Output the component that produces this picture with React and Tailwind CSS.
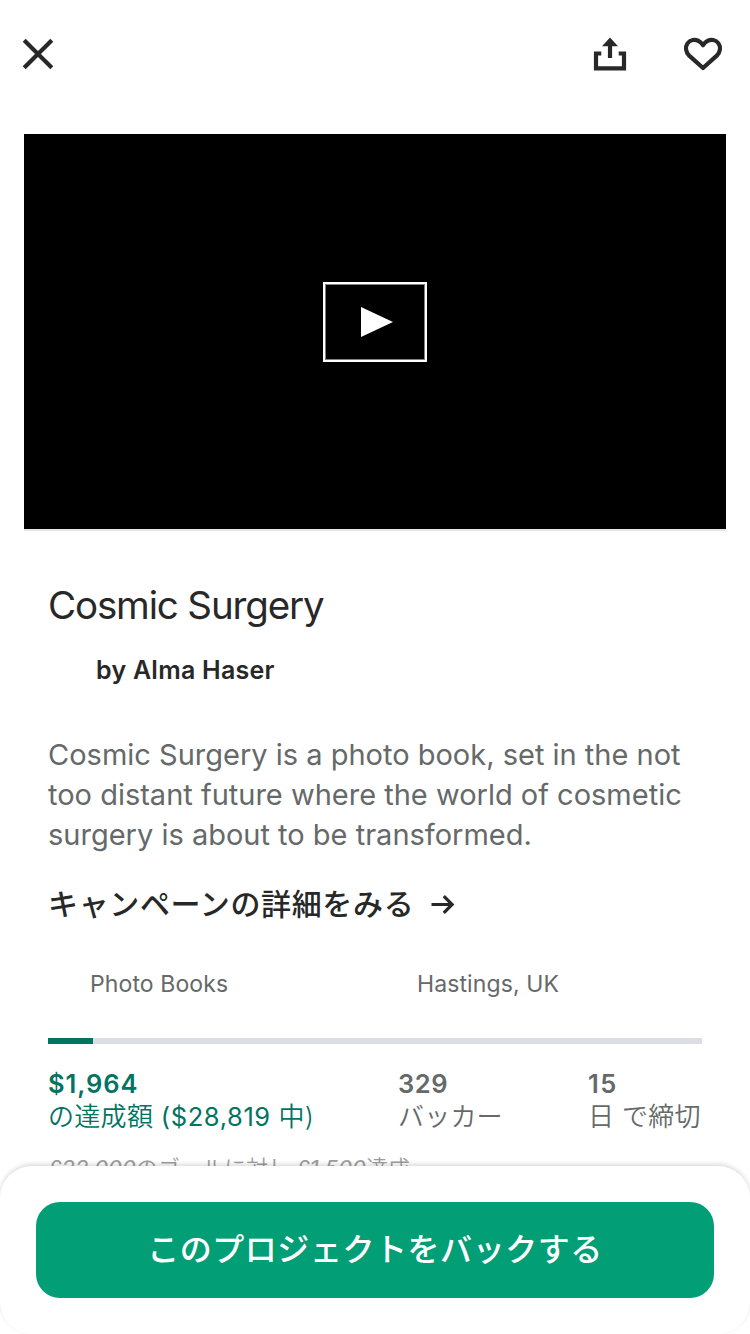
const CloseIcon = () => (
  <svg className="h-[34px] w-[34px]" viewBox="0 0 34 34" fill="none" stroke="#282828" strokeWidth="4.2" aria-hidden="true">
    <path d="M3.2 3.2 30.8 30.8M30.8 3.2 3.2 30.8" />
  </svg>
);

const ShareIcon = () => (
  <svg className="h-[34px] w-[34px]" viewBox="0 0 34 34" aria-hidden="true">
    <path d="M17 0.5 25 9.3H9Z" fill="#282828" />
    <path d="M17 8v13" stroke="#282828" strokeWidth="4.2" />
    <path d="M8.3 16.5H3V31.3H31V16.5H25.7" fill="none" stroke="#282828" strokeWidth="4.2" />
  </svg>
);

const HeartIcon = () => (
  <svg className="h-[34px] w-[40px]" viewBox="0 0 40 34" fill="none" stroke="#282828" strokeWidth="4.2" strokeLinejoin="round" aria-hidden="true">
    <path d="M20 31 6.2 18.6C2.6 15.2 2 10 4.5 6.4 7.2 2.6 12 2 15.4 3.9 17.4 5 19 6.5 20 8.2 21 6.5 22.6 5 24.6 3.9 28 2 32.8 2.6 35.5 6.4 38 10 37.4 15.2 33.8 18.6Z" />
  </svg>
);

const ArrowIcon = () => (
  <svg className="h-5 w-6" viewBox="0 0 24 20" fill="none" stroke="#282828" strokeWidth="3.2" aria-hidden="true">
    <path d="M0.5 10.5H21.5M12.8 2.200 21.100 10.500 12.800 18.800" />
  </svg>
);

export default function App() {
  return (
    <main className="relative h-[1334px] w-[750px] overflow-hidden bg-white font-['Inter','Noto_Sans_CJK_JP',sans-serif] text-[#282828]">
      <header className="flex h-[134px] items-start justify-between pt-[37px] pr-[27px] pl-[21px]">
        <button aria-label="Close"><CloseIcon /></button>
        <div className="flex gap-[56px]">
          <button aria-label="Share"><ShareIcon /></button>
          <button aria-label="Save"><HeartIcon /></button>
        </div>
      </header>

      <section className="mx-6 flex h-[397px] items-center justify-center border-b-2 border-[#e6e6e6] bg-black pb-[19px]">
        <button aria-label="Play" className="flex h-20 w-[104px] items-center justify-center border-2 border-white pl-1 shadow-[inset_0_0_0_1px_#808080]">
          <svg className="h-[30px] w-8" viewBox="0 0 32 30" aria-hidden="true">
            <path d="M0 0 32 15 0 30Z" fill="white" />
          </svg>
        </button>
      </section>

      <section className="px-12 pt-[50px] whitespace-nowrap">
        <h1 className="text-[38.5px] leading-[48px] tracking-[-1.15px]">Cosmic Surgery</h1>
        <p className="mt-[25px] pl-12 text-[25px] leading-8 font-semibold tracking-[0.25px]">by Alma Haser</p>
        <p className="mt-[49px] text-[29px] leading-10 text-[#656969]">
          <span className="block">Cosmic Surgery is a photo book, set in the not</span>
          <span className="block">too distant future where the world of cosmetic</span>
          <span className="block">surgery is about to be transformed.</span>
        </p>
        <a className="mt-[29px] flex h-10 items-center gap-[17px] text-[30px] leading-10 font-medium tracking-[0.65px]">
          キャンペーンの詳細をみる
          <ArrowIcon />
        </a>

        <div className="mt-11 flex h-8 text-[23px] leading-8 tracking-[0.1px] text-[#656969]">
          <span className="w-[327px] pl-[42px]">Photo Books</span>
          <span className="pl-[42px]">Hastings, UK</span>
        </div>

        <div className="mt-[38px] h-1.5 bg-[#dcdee6]">
          <div className="h-full w-[44.6px] bg-[#037362]" />
        </div>

        <div className="mt-6 flex text-[26px] leading-8 text-[#656969]">
          <div className="w-[350px] text-[#037362]">
            <p className="text-[25.5px] font-semibold tracking-[0.95px]">$1,964</p>
            <p className="pt-px font-[350] tracking-[0.3px]">の達成額 <span className="text-[25.5px] font-normal tracking-[0.6px]">($28,819</span> 中)</p>
          </div>
          <div className="w-[190px]">
            <p className="text-[25.5px] font-semibold tracking-[0.6px]">329</p>
            <p className="pt-px font-[350] tracking-[0.2px]">バッカー</p>
          </div>
          <div>
            <p className="text-[25.5px] font-semibold tracking-[1.5px]">15</p>
            <p className="pt-px font-[350] tracking-[0.3px]">日 で締切</p>
          </div>
        </div>
        <p className="mt-[19px] text-[22px] leading-8 tracking-[0.03px] text-[#9b9e9e]">
          <i>£22,000</i><span className="font-[350]">のゴールに対し</span> <i>£1,500</i><span className="font-[350]">達成</span>
        </p>
      </section>
      <hr className="mx-6 mt-[148px] border-[#d6d6d6]" />

      <footer className="absolute inset-x-0 bottom-0 h-[168px] rounded-[32px] bg-white px-9 pt-9 shadow-[0_-2px_4px_rgba(0,0,0,0.14)]">
        <button className="flex h-24 w-full items-center justify-center rounded-3xl bg-[#029e76] text-[32px] font-medium tracking-[0.55px] text-white">
          このプロジェクトをバックする
        </button>
      </footer>
    </main>
  );
}
